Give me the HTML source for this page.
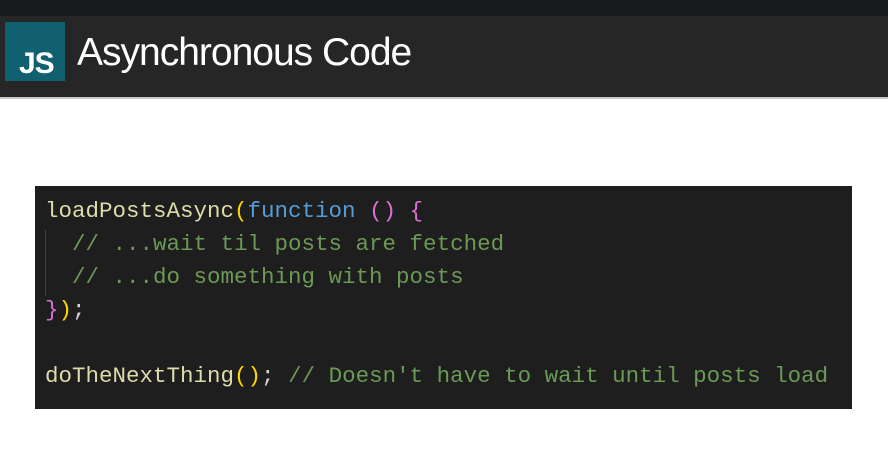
<!DOCTYPE html>
<html><head><style>
body{margin:0;width:888px;height:464px;background:#fff;position:relative;overflow:hidden;font-family:"Liberation Sans",sans-serif}
.top{position:absolute;left:0;top:0;width:888px;height:16px;background:#18191d}
.hdr{position:absolute;left:0;top:16px;width:888px;height:81px;background:#262626;border-bottom:2px solid #c8c8c8}
.logo{position:absolute;left:5px;top:6px;width:60px;height:59px;background:#11606f}
.logo span{position:absolute;left:14px;top:25px;color:#fff;font-weight:bold;font-size:30px;letter-spacing:-1px}
.title{position:absolute;left:77px;top:15px;color:#fff;font-size:39px;font-weight:normal;letter-spacing:-1px}
.code{position:absolute;left:35px;top:186px;width:817px;height:223px;background:#1e1e1e}
pre{margin:0;position:absolute;left:10px;top:9px;font-family:"Liberation Mono",monospace;font-size:22.5px;line-height:33px;color:#dcdcaa}
.g{color:#6a9955}.b{color:#569cd6}.y{color:#ffd700}.p{color:#da70d6}.w{color:#d4d4d4}
.guide{position:absolute;left:10px;top:44px;width:1px;height:66px;background:#404040}
</style></head><body>
<div class="top"></div>
<div class="hdr"><div class="logo"><span>JS</span></div><div class="title">Asynchronous Code</div></div>
<div class="code"><div class="guide"></div><pre>loadPostsAsync<span class="y">(</span><span class="b">function</span> <span class="p">()</span> <span class="p">{</span>
<span class="g">  // ...wait til posts are fetched</span>
<span class="g">  // ...do something with posts</span>
<span class="p">}</span><span class="y">)</span><span class="w">;</span>

doTheNextThing<span class="y">()</span><span class="w">;</span> <span class="g">// Doesn't have to wait until posts load</span></pre></div>
</body></html>
